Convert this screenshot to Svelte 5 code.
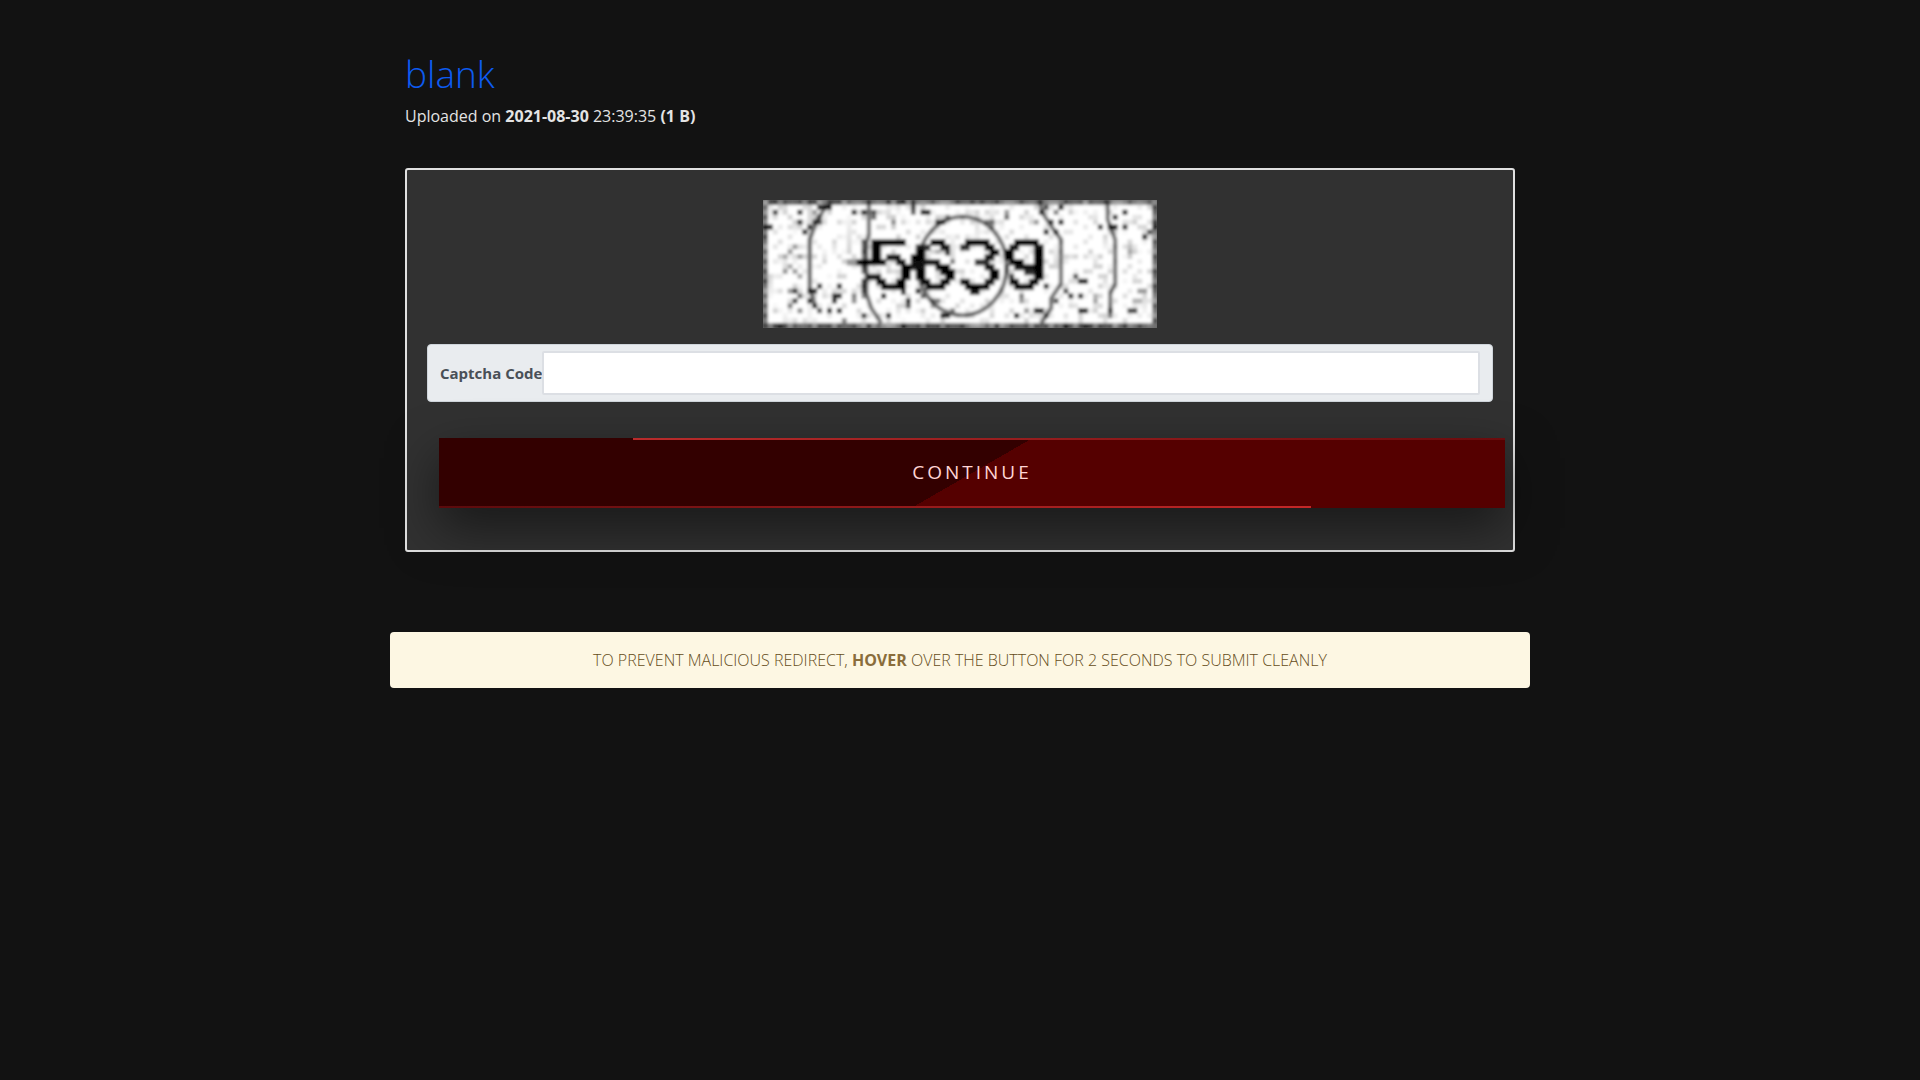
<script>
  let code = $state('');

  // Captcha cells as [x, y, width, darkness] on an 80 x 26 grid.
  const noise = [
    [2,2,1,.8],[7,2,1,.9],[11,1,3,.9],[18,2,1,.9],[20,2,1,1],[22,2,1,.7],[22,3,1,.6],[0,5,2,1],
    [7,4,1,.9],[10,4,2,.7],[8,6,1,.9],[9,5,1,.8],[32,2,2,1],[56,2,1,.8],[57,1,1,.7],[60,1,1,1],
    [60,4,1,1],[57,6,1,1],[58,4,1,.8],[59,6,1,.7],[55,4,1,.4],[71,3,1,.9],[73,2,1,1],[68,5,1,.8],
    [70,5,2,1],[73,5,1,.9],[77,7,1,1],[78,6,1,.7],[79,5,1,.8],[59,2,1,.5],[49,2,1,.4],[49,3,1,.5],
    [5,10,1,.4],[6,9,1,.4],[4,11,1,.3],[7,11,1,.4],[5,13,1,.35],[6,14,1,.4],[7,15,1,.35],[4,14,1,.3],
    [6,18,1,.8],[7,19,1,.6],[6,20,1,.8],[5,21,1,.5],[7,22,1,.4],[5,18,1,.3],[11,17,1,.9],[15,17,1,1],
    [14,19,2,.9],[14,20,1,.9],[9,18,2,.9],[9,20,1,.9],[10,21,1,.9],[11,22,1,.7],[13,22,1,1],[15,22,1,.9],
    [18,19,1,.5],[18,20,1,.4],[20,23,1,.8],[24,19,1,1],[25,23,1,1],[29,20,1,1],[29,21,1,.7],[31,18,1,1],
    [32,19,1,.6],[34,20,2,.5],[34,21,1,.3],[36,23,2,.9],[38,22,1,.5],[51,23,1,1],[52,19,1,.5],[52,20,1,.4],
    [55,22,2,1],[57,23,1,.6],[53,22,1,.4],[57,17,1,.9],[63,15,1,.7],[64,16,2,1],[62,19,1,.9],[64,19,1,.9],
    [61,18,1,.7],[59,20,1,.7],[64,22,2,.9],[70,22,1,.6],[67,19,1,.3],[67,20,1,.3],[75,20,2,.3],[74,22,2,.7],
    [76,18,2,.4],[74,10,1,.35],[74,9,1,.2],[74,11,1,.2],[26,3,1,.2],[26,4,1,.45],[26,5,1,.2],[61,25,1,1],
    [65,25,1,.6],[28,25,1,.8],[3,25,1,.8],[16,24,1,.4],[73,25,1,.6],[30,1,1,.5],[30,2,1,.3],[25,0,1,.4],
    [28,0,1,.4],[10,2,1,.4],[11,3,1,.5],[35,4,2,.8],[37,3,1,.5],[45,4,2,.5],[46,5,1,.4],[42,0,3,.3]
  ];

  const digits = [
    [22,8,7,1],[22,9,2,1],[22,10,2,1],[22,11,2,1],[25,11,3,.9],[19,12,6,1],[17,12,2,.4],[27,12,2,.9],
    [28,13,2,1],[28,14,2,1],[21,15,3,.9],[28,15,2,1],[23,16,2,1],[27,16,2,1],[24,17,5,1],[28,18,1,.8],
    [34,8,3,1],[31,9,3,.8],[36,9,2,.9],[31,10,2,1],[37,10,1,.8],[30,11,3,1],[30,12,6,.9],
    [29,13,4,.9],[35,13,3,1],[31,14,2,1],[36,14,3,1],[31,15,2,1],[37,15,2,1],[32,16,2,1],[36,16,2,1],
    [33,17,4,1],
    [41,8,5,1],[40,9,2,.8],[45,9,2,1],[46,10,2,1],[45,11,2,.9],[43,12,3,.8],[45,13,2,.9],[46,14,2,1],
    [46,15,2,1],[40,16,2,1],[45,16,2,.9],[41,17,5,1],[42,18,2,.9],
    [51,8,5,1],[50,9,2,.9],[55,9,2,.9],[49,10,2,1],[55,10,2,1],[49,11,2,1],[55,11,2,1],[50,12,3,1],
    [55,12,2,1],[51,13,5,.9],[55,13,2,1],[53,14,2,.8],[55,14,2,1],[50,15,1,.8],[55,15,2,1],[50,16,2,1],
    [54,16,2,1],[51,17,4,1]
  ];

  const shade = [
    [20,8,1,.6],[20,9,1,.6],[20,10,1,.7],[20,11,1,.5],[20,13,1,.7],[20,14,1,.6],[20,16,1,.8],[20,17,1,.9],
    [20,18,1,.7],[20,19,1,.4],[38,12,1,.4],[35,10,1,.3],[49,13,1,.4],[49,14,1,.4]
  ];

  // Faint grain over the whole field, plus a darker uneven rim.
  const grain = [];
  for (let y = 0; y < 26; y++) {
    for (let x = 0; x < 80; x++) {
      const h = ((x * 73 + y * 151 + x * y * 37 + x * x * 11) % 97) / 97;
      const rim = y === 0 || y === 25 || x === 0 || x === 79;
      if (rim) grain.push([x, y, 1, 0.35 + h * 0.45]);
      else if (h > 0.66) grain.push([x, y, 1, (h - 0.6) * 0.45]);
    }
  }

  const cells = [...grain, ...noise, ...shade];
</script>

<main>
  <header>
    <h1><a href="#file">blank</a></h1>
    <p>Uploaded on <strong>2021-08-30</strong> 23:39:35 <strong>(1 B)</strong></p>
  </header>

  <form class="card" onsubmit={(e) => e.preventDefault()}>
    <svg class="captcha" viewBox="0 0 80 26" preserveAspectRatio="none" role="img" aria-label="Captcha">
      <defs>
        <filter id="soft" x="0" y="0" width="1" height="1"><feGaussianBlur stdDeviation="0.34" /></filter>
      </defs>
      <rect width="80" height="26" fill="#666" />
      <g filter="url(#soft)">
        <rect width="80" height="26" fill="#fff" />
        <g fill="none" stroke="#333" stroke-width=".9" opacity=".65">
          <ellipse cx="40.5" cy="13.4" rx="9" ry="10" />
          <path d="M21.500 0V7l-.5 2v10l1 3 2 3M30.500 0v3M13 1l-2 3-1.500 4v10l1 3M56 0l1 3 2 3 1.500 2v9l-2 3v2l-2 3M70 0v4l1.500 4v9l-1 2v5" />
        </g>
        <g>
          {#each cells as [x, y, w, o]}
            <rect {x} {y} width={w} height="1" fill-opacity={o} />
          {/each}
          {#each digits as [x, y, w, o]}
            <rect {x} {y} width={w} height="1.300" fill-opacity={o} />
          {/each}
        </g>
      </g>
    </svg>

    <div class="group">
      <label for="code">Captcha Code</label>
      <input id="code" type="text" autocomplete="off" bind:value={code} />
    </div>

    <button type="submit">Continue</button>
  </form>

  <div class="alert" role="alert">
    TO PREVENT MALICIOUS REDIRECT, <strong>HOVER</strong> OVER THE BUTTON FOR 2 SECONDS TO SUBMIT CLEANLY
  </div>
</main>

<style>
  :global(body) {
    margin: 0;
    background: #121212;
  }
  main {
    box-sizing: border-box;
    max-width: 1140px;
    margin: 0 auto;
    padding: 50px 0;
    color: #e4e4e4;
    font: 16px/24px 'Segoe UI', 'Open Sans', 'Noto Sans', sans-serif;
  }
  header {
    padding: 0 15px;
  }
  h1 {
    margin: 0 0 6px;
    font-size: 37px;
    line-height: 48px;
    font-weight: 300;
  }
  h1 a {
    color: #0d5bf0;
    text-decoration: none;
  }
  p {
    margin: 0;
  }
  strong {
    font-weight: 700;
  }
  .card {
    display: flex;
    flex-direction: column;
    box-sizing: border-box;
    margin: 40px 15px 80px;
    padding: 30px 20px 42px;
    border: 2px solid #e0e0e0;
    border-radius: 3px;
    background: #313131;
  }
  .captcha {
    display: block;
    align-self: center;
    width: 394px;
    max-width: 100%;
    height: 128px;
  }
  .group {
    display: flex;
    align-items: center;
    box-sizing: border-box;
    margin-top: 16px;
    padding: 6px 12px;
    border: 1px solid #ced4da;
    border-radius: 4px;
    background: #e9ecef;
  }
  label {
    color: #495057;
    font-size: 15px;
    font-weight: 700;
  }
  input {
    flex: 1;
    min-width: 0;
    box-sizing: border-box;
    height: 44px;
    padding: 0 8px;
    border: 2px solid #dcdfe4;
    border-radius: 2px;
    background: #fff;
    font: inherit;
  }
  button {
    position: relative;
    width: 100%;
    height: 70px;
    margin: 36px 0 0 12px;
    padding: 0 0 2px;
    border: 0;
    background: linear-gradient(150deg, #300 50%, #500 50%);
    box-shadow: 0 20px 50px rgba(0, 0, 0, 0.5);
    color: #ffd5d5;
    font: 500 19px/30px 'Open Sans', sans-serif;
    letter-spacing: 3px;
    text-transform: uppercase;
  }
  button::before,
  button::after {
    content: '';
    position: absolute;
    left: 0;
    right: 0;
    height: 2px;
  }
  button::before {
    top: 0;
    background: linear-gradient(to right, transparent 18.2%, #b92b2b 18.2%, #6b0b0d);
  }
  button::after {
    bottom: 0;
    background: linear-gradient(to right, #5b0a0c, #c42828 81.8%, transparent 81.8%);
  }
  .alert {
    padding: 16px;
    border-radius: 4px;
    background: #fdf7e3;
    color: #654d20;
    font-weight: 300;
    text-align: center;
  }
  .alert strong {
    color: #8a6d3b;
  }
</style>
